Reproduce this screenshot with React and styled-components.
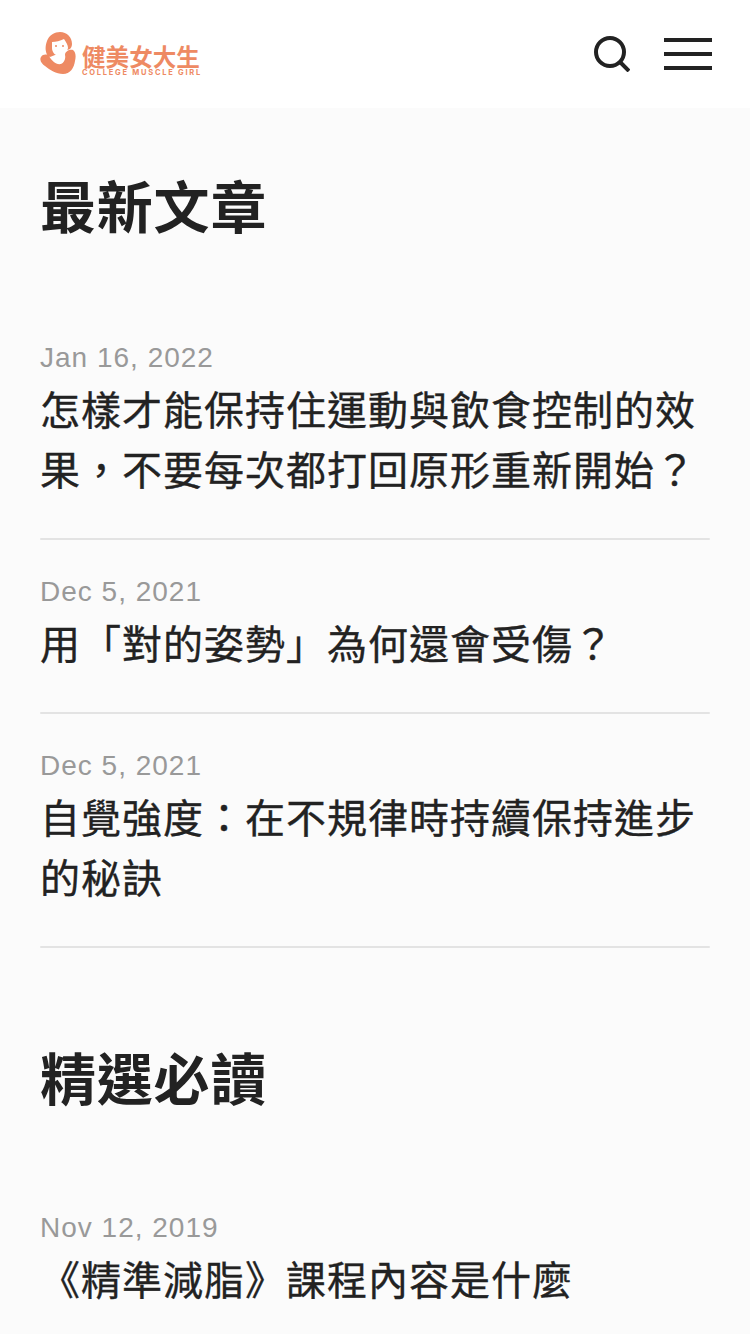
import React from "react";
import styled, { createGlobalStyle } from "styled-components";

const Global = createGlobalStyle`
  html, body { margin: 0; padding: 0; background: #fbfbfb; }
  body { font-family: "Liberation Sans", "Noto Sans CJK TC", sans-serif; }
`;
const Page = styled.div`width: 750px; height: 1334px; overflow: hidden; background: #fbfbfb;`;
const Header = styled.header`
  height: 108px; background: #fff; box-sizing: border-box;
  padding: 0 38px 0 40px; display: flex; align-items: center; justify-content: space-between;
`;
const Logo = styled.div`display: flex; align-items: flex-start; gap: 6px; color: #ee8a63;`;
const LogoText = styled.div`display: flex; flex-direction: column; align-items: flex-start; padding-top: 12px;`;
const LogoTitle = styled.div`font: 700 23.6px/24px "Noto Sans CJK TC", sans-serif;`;
const LogoSub = styled.div`font: 700 7.5px/8px "Inter", sans-serif; letter-spacing: 1.75px; white-space: nowrap; margin-top: 1px;`;
const Actions = styled.div`display: flex; align-items: center; gap: 34px;`;
const Main = styled.main`padding: 0 40px;`;
const Heading = styled.h2`
  margin: 0; font: 700 56px/70px "Noto Sans CJK TC", sans-serif; color: #222; letter-spacing: .8px;
`;
const Section = styled.section`padding-top: ${p => p.$top}px;`;
const List = styled.div`margin-top: ${p => p.$top}px;`;
const Item = styled.article`margin-bottom: 30px;`;
const DateText = styled.div`font: 400 28px/44px "Liberation Sans", sans-serif; color: #999; letter-spacing: 1px;`;
const Title = styled.h3`
  margin: -2px 0 0; font: 400 40px/60px "Noto Sans CJK TC", sans-serif; color: #222; letter-spacing: 1px;
  -webkit-text-stroke: .35px #222;
`;
const Divider = styled.hr`
  margin: 40px 0 0; border: 0; height: 2px; border-radius: 1px; background: #e3e3e3;
`;

const Latest = [
  ["Jan 16, 2022", "怎樣才能保持住運動與飲食控制的效果，不要每次都打回原形重新開始？"],
  ["Dec 5, 2021", "用「對的姿勢」為何還會受傷？"],
  ["Dec 5, 2021", "自覺強度：在不規律時持續保持進步的秘訣"],
];

export default function App() {
  return (
    <Page>
      <Global />
      <Header>
        <Logo>
          <svg width="36" height="44" viewBox="0 0 36 44" fill="#ee8a63">
            <path d="M8 24C5 20 5 14 7 9C9 3 15 0 20 0C27 0 32 5 32 12C32 14 31 16 30 17L10 25Z" />
            <path d="M12 10C16 10 20 9 24 7C26 10 28 13 28 16C27 21 23 24 20 24C16 24 12 21 12 16Z" fill="#fff" />
            <circle cx="16" cy="14" r="1" />
            <circle cx="23" cy="14" r="1" />
            <path d="M1 25C3 22 7 22 9 24C12 29 16 33 21 32C24 31 26 27 25 23C25 19 30 17 33 18C36 20 36 25 35 29C34 36 30 42 23 42C16 42 10 38 5 34C2 32 -1 28 1 25Z" />
          </svg>
          <LogoText>
            <LogoTitle>健美女大生</LogoTitle>
            <LogoSub>COLLEGE MUSCLE GIRL</LogoSub>
          </LogoText>
        </Logo>
        <Actions>
          <svg width="36" height="36" viewBox="0 0 36 36" fill="none" stroke="#222" strokeWidth="4">
            <circle cx="16" cy="16" r="14" />
            <path d="M26 26L35 35" />
          </svg>
          <svg width="48" height="32" viewBox="0 0 48 32" stroke="#222" strokeWidth="4">
            <path d="M0 2h48M0 16h48M0 30h48" />
          </svg>
        </Actions>
      </Header>
      <Main>
        <Section $top={61}>
          <Heading>最新文章</Heading>
          <List $top={97}>
            {Latest.map(([d, t]) => (
              <Item key={t}>
                <DateText>{d}</DateText>
                <Title>{t}</Title>
                <Divider />
              </Item>
            ))}
          </List>
        </Section>
        <Section $top={63}>
          <Heading>精選必讀</Heading>
          <List $top={95}>
            <Item>
              <DateText>Nov 12, 2019</DateText>
              <Title>《精準減脂》課程內容是什麼</Title>
            </Item>
          </List>
        </Section>
      </Main>
    </Page>
  );
}
